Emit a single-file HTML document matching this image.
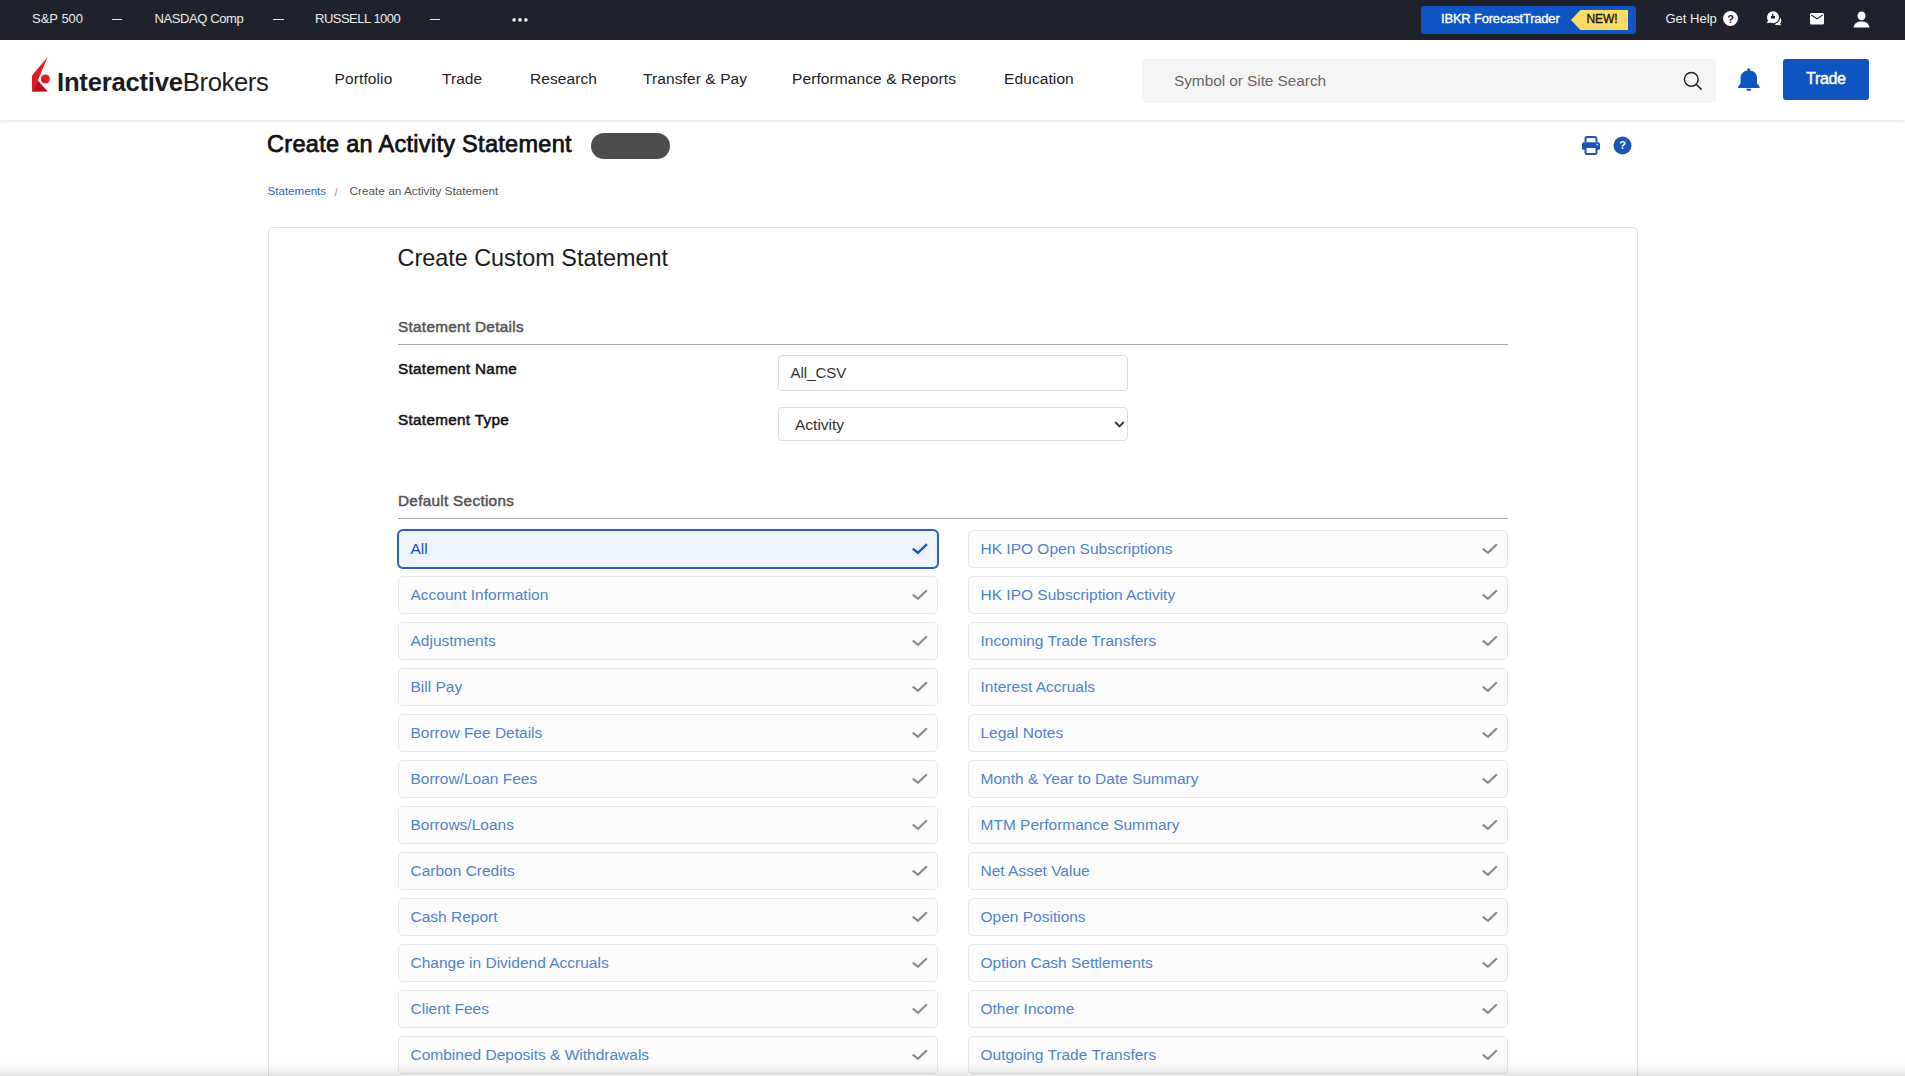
<!DOCTYPE html>
<html><head><meta charset="utf-8">
<style>
*{box-sizing:border-box;margin:0;padding:0}
html,body{width:1905px;height:1076px;overflow:hidden;background:#fff;font-family:"Liberation Sans",sans-serif;position:relative}
.a{position:absolute;white-space:nowrap;line-height:1}
#top{position:absolute;left:0;top:0;width:1905px;height:40px;background:#1f222c;}
#hdr{position:absolute;left:0;top:40px;width:1905px;height:80px;background:#fff;box-shadow:0 1px 4px rgba(0,0,0,.13)}
.dash{position:absolute;height:1.6px;background:#e8e8e8;top:18.7px}
.fl{position:absolute;width:10px;height:1px;top:19px;background:#1b1d25}
.card{position:absolute;left:268px;top:227px;width:1370px;height:900px;border:1px solid #e4e4e4;border-radius:5px;background:#fff}
.box{position:absolute;width:540px;height:38px;border:1px solid #e6e6e6;border-radius:5px;background:#fcfcfc}
.box span{position:absolute;left:11.5px;top:9.9px;font-size:15.5px;line-height:1;color:#5082cf;white-space:nowrap}
.box svg{position:absolute;left:512px;top:12px}
.box.sel{border-color:#2c60bb;box-shadow:0 0 0 1px #2c60bb;background:#eef4fd}
.box.sel span{color:#1a4fa8}
#bshadow{position:absolute;left:0;top:1063px;width:1905px;height:13px;background:linear-gradient(to bottom,rgba(0,0,0,0),rgba(0,0,0,.1))}
</style></head><body>
<div id="top">
<div class="a" style="left:32px;top:11.99px;font-size:13px;color:#ececec;">S&amp;P 500</div>
<div class="dash" style="left:111.5px;width:10.5px"></div><div class="fl" style="left:92px"></div>
<div class="a" style="left:154.5px;top:11.99px;font-size:13px;color:#ececec;letter-spacing:-0.4px;">NASDAQ Comp</div>
<div class="dash" style="left:273px;width:10.5px"></div><div class="fl" style="left:252px"></div>
<div class="a" style="left:315px;top:11.99px;font-size:13px;color:#ececec;letter-spacing:-0.5px;">RUSSELL 1000</div>
<div class="dash" style="left:429.5px;width:10.5px"></div><div class="fl" style="left:409px"></div>
<svg class="a" style="left:511px;top:17px" width="18" height="6"><circle cx="3.1" cy="2.9" r="1.8" fill="#f2f2f2"/><circle cx="9" cy="2.9" r="1.8" fill="#f2f2f2"/><circle cx="14.85" cy="2.9" r="1.8" fill="#f2f2f2"/></svg>
<div class="a" style="left:1421px;top:6px;width:215px;height:28px;background:#0f55c3;border-radius:3px"></div>
<div class="a" style="left:1441px;top:12.1px;font-size:13px;color:#fff;letter-spacing:-0.2px;-webkit-text-stroke:0.35px #fff">IBKR ForecastTrader</div>
<svg class="a" style="left:1570px;top:10px" width="60" height="20"><path d="M1 10 L10.5 0 H58 V20 H10.5 Z" fill="#fddc63"/></svg>
<div class="a" style="left:1586.5px;top:13.2px;font-size:12px;color:#111;letter-spacing:-0.1px;-webkit-text-stroke:0.3px #111">NEW!</div>
<div class="a" style="left:1665.5px;top:12.1px;font-size:13px;color:#f0f0f0">Get Help</div>
<svg class="a" style="left:1722.5px;top:11.3px" width="15" height="15" viewBox="0 0 15 15"><circle cx="7.5" cy="7.5" r="7.4" fill="#fff"/><text x="7.5" y="11.6" text-anchor="middle" font-family="Liberation Sans" font-weight="700" font-size="11" fill="#1f222c">?</text></svg>
<svg class="a" style="left:1760px;top:8px" width="25" height="22" viewBox="1760 8 25 22"><circle cx="1777" cy="20.6" r="4.3" fill="#fff"/><path d="M1779.5 23 L1781.6 25.4 L1777.5 24.6 Z" fill="#fff"/><circle cx="1773" cy="17.2" r="7.2" fill="#1f222c"/><circle cx="1773" cy="17.2" r="6" fill="#fff"/><path d="M1768.2 20.5 L1766.8 23.3 L1770.5 22.6 Z" fill="#fff"/><path d="M1771 15.9 H1775 V18.5 H1771 Z M1772.1 13.8 H1773.4 V15.9 H1772.1Z" fill="#1f222c"/></svg>
<svg class="a" style="left:1810px;top:13px" width="14" height="11.5" viewBox="0 0 14 11.5"><rect x="0" y="0" width="14" height="11.5" rx="1.6" fill="#fff"/><path d="M1.3 2.1 L7 5.9 L12.7 2.1" fill="none" stroke="#1f222c" stroke-width="1.2"/></svg>
<svg class="a" style="left:1852.5px;top:10.5px" width="17" height="17" viewBox="0 0 17 17"><ellipse cx="8.5" cy="4.8" rx="4" ry="4.4" fill="#fff"/><path d="M0.6 16.6 C1 12.2 4.2 10.4 8.5 10.4 C12.8 10.4 16 12.2 16.4 16.6 Z" fill="#fff"/></svg>
</div>
<div id="hdr"></div>
<svg class="a" style="left:0;top:40px;z-index:3" width="60" height="60" viewBox="0 40 60 60"><path d="M47.6 57 L32 75.4 L32 91.8 L37.8 80.4 Z" fill="#e31b23"/><path d="M37.8 80.4 L47.9 91.6 L32 91.8 Z" fill="#b3121c"/><path d="M32 75.4 L32 91.8 L37.8 80.4 Z" fill="#e31b23"/><circle cx="45.4" cy="79" r="4.5" fill="#e31b23"/></svg>
<div class="a" style="left:57px;top:70.4px;font-size:25.7px;color:#1d1d1d;z-index:3;letter-spacing:-0.25px"><b>Interactive</b><span style="letter-spacing:-0.4px">Brokers</span></div>
<div class="a" style="left:334.6px;top:70.88px;font-size:15.5px;color:#222;letter-spacing:0.1px;">Portfolio</div>
<div class="a" style="left:441.9px;top:70.88px;font-size:15.5px;color:#222;letter-spacing:0.1px;">Trade</div>
<div class="a" style="left:529.9px;top:70.88px;font-size:15.5px;color:#222;letter-spacing:0.1px;">Research</div>
<div class="a" style="left:643px;top:70.88px;font-size:15.5px;color:#222;letter-spacing:0.1px;">Transfer &amp; Pay</div>
<div class="a" style="left:792px;top:70.88px;font-size:15.5px;color:#222;letter-spacing:0.1px;">Performance &amp; Reports</div>
<div class="a" style="left:1004px;top:70.88px;font-size:15.5px;color:#222;letter-spacing:0.1px;">Education</div>
<div class="a" style="left:1142px;top:59px;width:574px;height:43.5px;background:#f5f5f5;border-radius:4px;z-index:3"></div>
<div class="a" style="left:1174px;top:72.9px;font-size:15.4px;color:#666;z-index:3;letter-spacing:-0.05px">Symbol or Site Search</div>
<svg class="a" style="left:1683px;top:71px;z-index:3" width="20" height="20" viewBox="0 0 20 20"><circle cx="8.3" cy="8.3" r="6.9" fill="none" stroke="#222" stroke-width="1.5"/><path d="M13.2 13.2 L18.6 18.6" stroke="#222" stroke-width="1.6"/></svg>
<svg class="a" style="left:1735px;top:66px;z-index:3" width="27" height="27" viewBox="1735 66 27 27"><circle cx="1748.8" cy="69.9" r="1.6" fill="#0e56c0"/><path d="M1738 87.9 V86.7 L1740.6 83.6 V77.8 C1740.6 73.4 1744.2 70.6 1748.8 70.6 C1753.4 70.6 1757 73.4 1757 77.8 V83.6 L1759.6 86.7 V87.9 Z" fill="#0e56c0"/><path d="M1746.3 88.8 A2.5 2.3 0 0 0 1751.3 88.8 Z" fill="#0e56c0"/></svg>
<div class="a" style="left:1783px;top:59px;width:86px;height:41px;background:#0e55c1;border-radius:3px;z-index:3"></div>
<div class="a" style="left:1806px;top:70.9px;font-size:16px;color:#fff;z-index:3;letter-spacing:-0.3px;-webkit-text-stroke:0.45px #fff">Trade</div>
<div class="a" style="left:267px;top:133.1px;font-size:23.5px;color:#111;letter-spacing:0.3px;-webkit-text-stroke:0.75px #111">Create an Activity Statement</div>
<div class="a" style="left:591px;top:133px;width:79px;height:25.5px;background:#4d4d4d;border-radius:13px"></div>
<div class="a" style="left:267.5px;top:184.8px;font-size:11.6px;color:#2f66c2">Statements</div>
<div class="a" style="left:334.5px;top:185.6px;font-size:11.6px;color:#999">/</div>
<div class="a" style="left:349.5px;top:185.6px;font-size:11.8px;color:#555">Create an Activity Statement</div>
<svg class="a" style="left:1581px;top:135.5px" width="20" height="19" viewBox="0 0 20 19"><path d="M4.5 6 V2.8 A1.8 1.8 0 0 1 6.3 1 H13.7 A1.8 1.8 0 0 1 15.5 2.8 V6" fill="none" stroke="#1a56b8" stroke-width="2"/><rect x="1" y="6.3" width="18" height="7.5" rx="1.6" fill="#1a56b8"/><rect x="4.5" y="11" width="11" height="7" rx="1.3" fill="#fff" stroke="#1a56b8" stroke-width="2"/><circle cx="16.3" cy="8.6" r="0.8" fill="#fff"/></svg>
<svg class="a" style="left:1613px;top:136px" width="19" height="19" viewBox="0 0 19 19"><circle cx="9.5" cy="9.5" r="9" fill="#1a56b8"/><text x="9.5" y="13.2" text-anchor="middle" font-family="Liberation Sans" font-weight="700" font-size="11" fill="#fff">?</text></svg>
<div class="card"></div>
<div class="a" style="left:397.5px;top:246.9px;font-size:23.4px;color:#1a1a1a">Create Custom Statement</div>
<div class="a" style="left:398px;top:319.3px;font-size:15.3px;color:#555;letter-spacing:0.3px;-webkit-text-stroke:0.5px #555">Statement Details</div>
<div class="a" style="left:398px;top:344px;width:1110px;height:1px;background:#a8a8a8"></div>
<div class="a" style="left:398px;top:361.4px;font-size:15.3px;color:#111;letter-spacing:0.3px;-webkit-text-stroke:0.5px #111">Statement Name</div>
<div class="a" style="left:398px;top:412.3px;font-size:15.3px;color:#111;letter-spacing:0.3px;-webkit-text-stroke:0.5px #111">Statement Type</div>
<div class="a" style="left:778px;top:355px;width:350px;height:36px;border:1px solid #dcdcdc;border-radius:4px;background:#fff"></div>
<div class="a" style="left:790.5px;top:364.9px;font-size:15px;color:#333">All_CSV</div>
<div class="a" style="left:778px;top:407px;width:350px;height:34px;border:1px solid #dcdcdc;border-radius:4px;background:#fff"></div>
<div class="a" style="left:795px;top:417.2px;font-size:15.5px;color:#333">Activity</div>
<svg class="a" style="left:1113.5px;top:420px" width="11" height="9" viewBox="0 0 11 9"><path d="M1.3 2 L5.5 6.3 L9.7 2" fill="none" stroke="#383838" stroke-width="1.9"/></svg>
<div class="a" style="left:398px;top:493.3px;font-size:15.3px;color:#555;letter-spacing:0.3px;-webkit-text-stroke:0.5px #555">Default Sections</div>
<div class="a" style="left:398px;top:518px;width:1110px;height:1px;background:#a8a8a8"></div>
<div class="box sel" style="left:398px;top:530px"><span>All</span><svg width="18" height="13" viewBox="0 0 18 13"><path d="M1.8 5.6 L6.9 9.8 L15.9 1.2" fill="none" stroke="#1d56b5" stroke-width="2.4"/></svg></div>
<div class="box" style="left:968px;top:530px"><span>HK IPO Open Subscriptions</span><svg width="18" height="13" viewBox="0 0 18 13"><path d="M1.8 5.6 L6.9 9.8 L15.9 1.2" fill="none" stroke="#8a8a8a" stroke-width="2.1"/></svg></div>
<div class="box" style="left:398px;top:576px"><span>Account Information</span><svg width="18" height="13" viewBox="0 0 18 13"><path d="M1.8 5.6 L6.9 9.8 L15.9 1.2" fill="none" stroke="#8a8a8a" stroke-width="2.1"/></svg></div>
<div class="box" style="left:968px;top:576px"><span>HK IPO Subscription Activity</span><svg width="18" height="13" viewBox="0 0 18 13"><path d="M1.8 5.6 L6.9 9.8 L15.9 1.2" fill="none" stroke="#8a8a8a" stroke-width="2.1"/></svg></div>
<div class="box" style="left:398px;top:622px"><span>Adjustments</span><svg width="18" height="13" viewBox="0 0 18 13"><path d="M1.8 5.6 L6.9 9.8 L15.9 1.2" fill="none" stroke="#8a8a8a" stroke-width="2.1"/></svg></div>
<div class="box" style="left:968px;top:622px"><span>Incoming Trade Transfers</span><svg width="18" height="13" viewBox="0 0 18 13"><path d="M1.8 5.6 L6.9 9.8 L15.9 1.2" fill="none" stroke="#8a8a8a" stroke-width="2.1"/></svg></div>
<div class="box" style="left:398px;top:668px"><span>Bill Pay</span><svg width="18" height="13" viewBox="0 0 18 13"><path d="M1.8 5.6 L6.9 9.8 L15.9 1.2" fill="none" stroke="#8a8a8a" stroke-width="2.1"/></svg></div>
<div class="box" style="left:968px;top:668px"><span>Interest Accruals</span><svg width="18" height="13" viewBox="0 0 18 13"><path d="M1.8 5.6 L6.9 9.8 L15.9 1.2" fill="none" stroke="#8a8a8a" stroke-width="2.1"/></svg></div>
<div class="box" style="left:398px;top:714px"><span>Borrow Fee Details</span><svg width="18" height="13" viewBox="0 0 18 13"><path d="M1.8 5.6 L6.9 9.8 L15.9 1.2" fill="none" stroke="#8a8a8a" stroke-width="2.1"/></svg></div>
<div class="box" style="left:968px;top:714px"><span>Legal Notes</span><svg width="18" height="13" viewBox="0 0 18 13"><path d="M1.8 5.6 L6.9 9.8 L15.9 1.2" fill="none" stroke="#8a8a8a" stroke-width="2.1"/></svg></div>
<div class="box" style="left:398px;top:760px"><span>Borrow/Loan Fees</span><svg width="18" height="13" viewBox="0 0 18 13"><path d="M1.8 5.6 L6.9 9.8 L15.9 1.2" fill="none" stroke="#8a8a8a" stroke-width="2.1"/></svg></div>
<div class="box" style="left:968px;top:760px"><span>Month &amp; Year to Date Summary</span><svg width="18" height="13" viewBox="0 0 18 13"><path d="M1.8 5.6 L6.9 9.8 L15.9 1.2" fill="none" stroke="#8a8a8a" stroke-width="2.1"/></svg></div>
<div class="box" style="left:398px;top:806px"><span>Borrows/Loans</span><svg width="18" height="13" viewBox="0 0 18 13"><path d="M1.8 5.6 L6.9 9.8 L15.9 1.2" fill="none" stroke="#8a8a8a" stroke-width="2.1"/></svg></div>
<div class="box" style="left:968px;top:806px"><span>MTM Performance Summary</span><svg width="18" height="13" viewBox="0 0 18 13"><path d="M1.8 5.6 L6.9 9.8 L15.9 1.2" fill="none" stroke="#8a8a8a" stroke-width="2.1"/></svg></div>
<div class="box" style="left:398px;top:852px"><span>Carbon Credits</span><svg width="18" height="13" viewBox="0 0 18 13"><path d="M1.8 5.6 L6.9 9.8 L15.9 1.2" fill="none" stroke="#8a8a8a" stroke-width="2.1"/></svg></div>
<div class="box" style="left:968px;top:852px"><span>Net Asset Value</span><svg width="18" height="13" viewBox="0 0 18 13"><path d="M1.8 5.6 L6.9 9.8 L15.9 1.2" fill="none" stroke="#8a8a8a" stroke-width="2.1"/></svg></div>
<div class="box" style="left:398px;top:898px"><span>Cash Report</span><svg width="18" height="13" viewBox="0 0 18 13"><path d="M1.8 5.6 L6.9 9.8 L15.9 1.2" fill="none" stroke="#8a8a8a" stroke-width="2.1"/></svg></div>
<div class="box" style="left:968px;top:898px"><span>Open Positions</span><svg width="18" height="13" viewBox="0 0 18 13"><path d="M1.8 5.6 L6.9 9.8 L15.9 1.2" fill="none" stroke="#8a8a8a" stroke-width="2.1"/></svg></div>
<div class="box" style="left:398px;top:944px"><span>Change in Dividend Accruals</span><svg width="18" height="13" viewBox="0 0 18 13"><path d="M1.8 5.6 L6.9 9.8 L15.9 1.2" fill="none" stroke="#8a8a8a" stroke-width="2.1"/></svg></div>
<div class="box" style="left:968px;top:944px"><span>Option Cash Settlements</span><svg width="18" height="13" viewBox="0 0 18 13"><path d="M1.8 5.6 L6.9 9.8 L15.9 1.2" fill="none" stroke="#8a8a8a" stroke-width="2.1"/></svg></div>
<div class="box" style="left:398px;top:990px"><span>Client Fees</span><svg width="18" height="13" viewBox="0 0 18 13"><path d="M1.8 5.6 L6.9 9.8 L15.9 1.2" fill="none" stroke="#8a8a8a" stroke-width="2.1"/></svg></div>
<div class="box" style="left:968px;top:990px"><span>Other Income</span><svg width="18" height="13" viewBox="0 0 18 13"><path d="M1.8 5.6 L6.9 9.8 L15.9 1.2" fill="none" stroke="#8a8a8a" stroke-width="2.1"/></svg></div>
<div class="box" style="left:398px;top:1036px"><span>Combined Deposits &amp; Withdrawals</span><svg width="18" height="13" viewBox="0 0 18 13"><path d="M1.8 5.6 L6.9 9.8 L15.9 1.2" fill="none" stroke="#8a8a8a" stroke-width="2.1"/></svg></div>
<div class="box" style="left:968px;top:1036px"><span>Outgoing Trade Transfers</span><svg width="18" height="13" viewBox="0 0 18 13"><path d="M1.8 5.6 L6.9 9.8 L15.9 1.2" fill="none" stroke="#8a8a8a" stroke-width="2.1"/></svg></div>
<div id="bshadow"></div>
</body></html>
